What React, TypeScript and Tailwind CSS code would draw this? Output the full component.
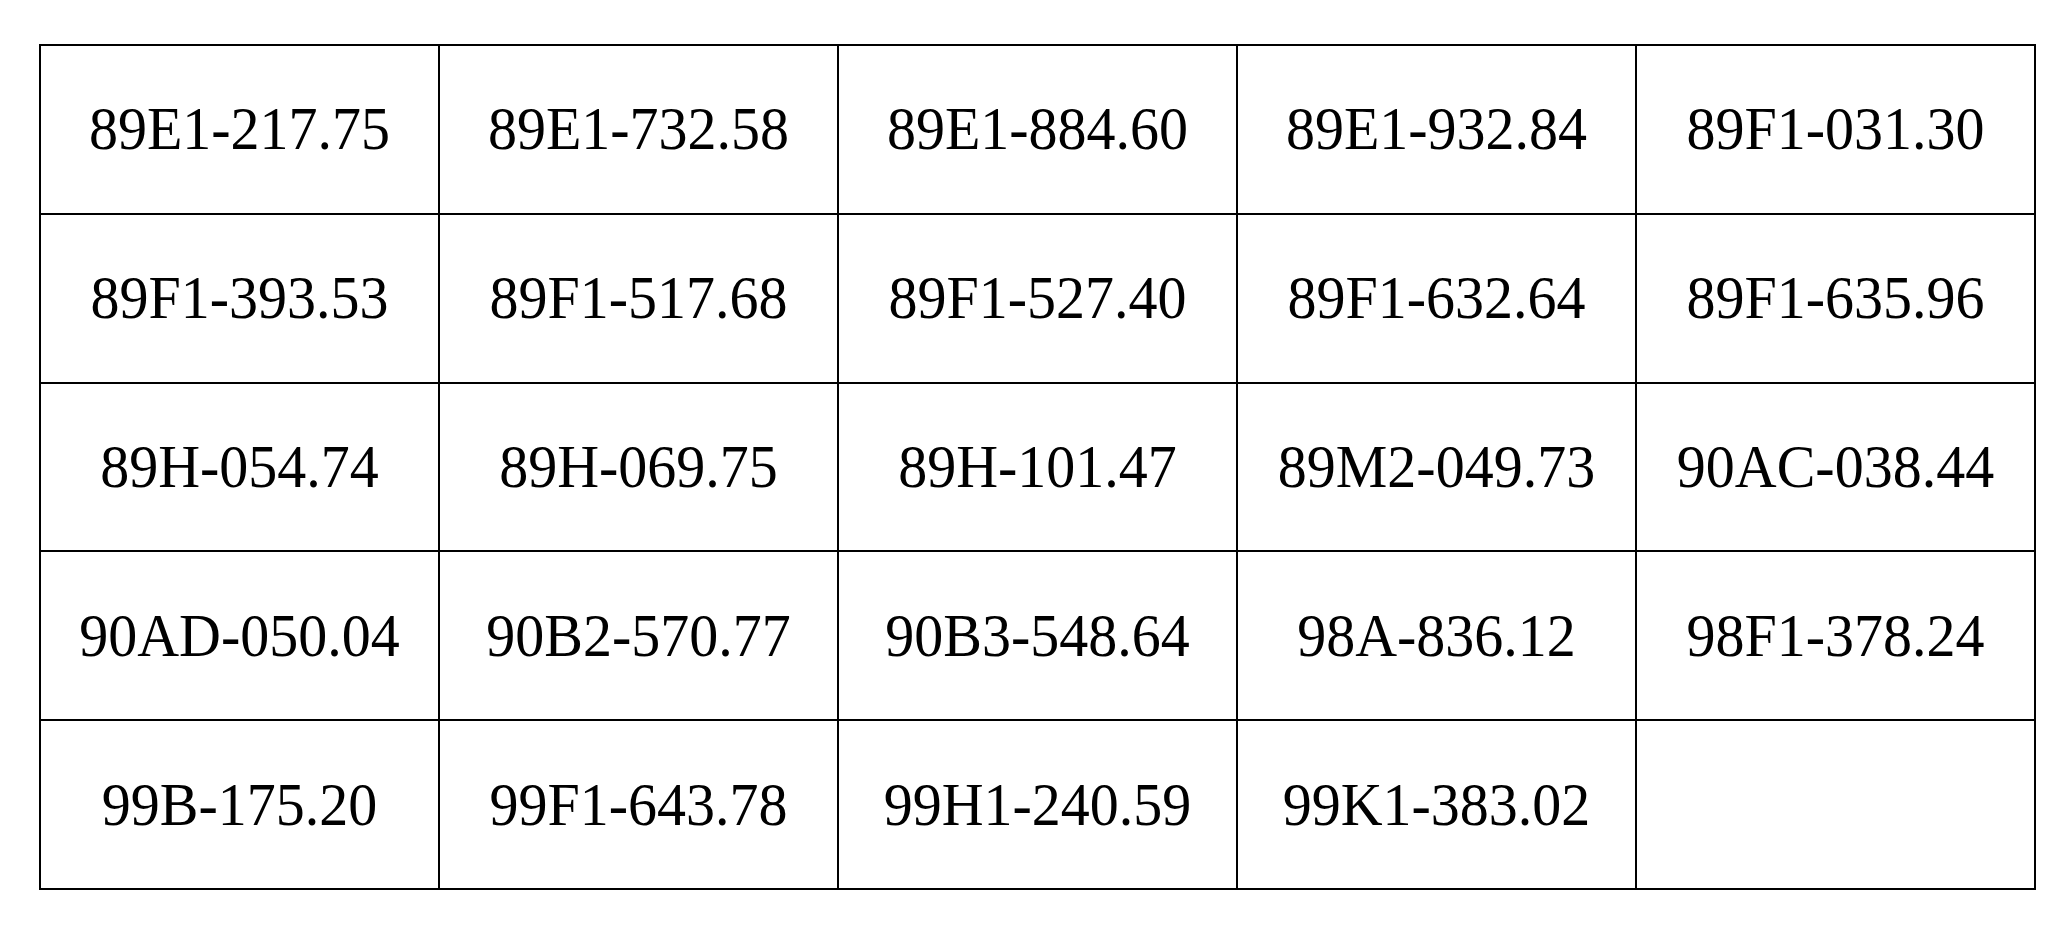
const codes = [
  '89E1-217.75', '89E1-732.58', '89E1-884.60', '89E1-932.84', '89F1-031.30',
  '89F1-393.53', '89F1-517.68', '89F1-527.40', '89F1-632.64', '89F1-635.96',
  '89H-054.74', '89H-069.75', '89H-101.47', '89M2-049.73', '90AC-038.44',
  '90AD-050.04', '90B2-570.77', '90B3-548.64', '98A-836.12', '98F1-378.24',
  '99B-175.20', '99F1-643.78', '99H1-240.59', '99K1-383.02', '',
];

export default function App() {
  return (
    <div className="w-[2060px] h-[943px] bg-white pl-[39px] pt-[44px]">
      <div className="grid grid-cols-[repeat(5,399px)] w-[1997px] border-l-2 border-t-2 border-black">
        {codes.map((code, i) => (
          <div
            key={i}
            className="h-[168.8px] flex items-center justify-center border-r-2 border-b-2 border-black"
          >
            <span className="text-[58px] leading-none text-black scale-y-105 font-['Liberation_Serif','Times_New_Roman',serif]">
              {code}
            </span>
          </div>
        ))}
      </div>
    </div>
  );
}
